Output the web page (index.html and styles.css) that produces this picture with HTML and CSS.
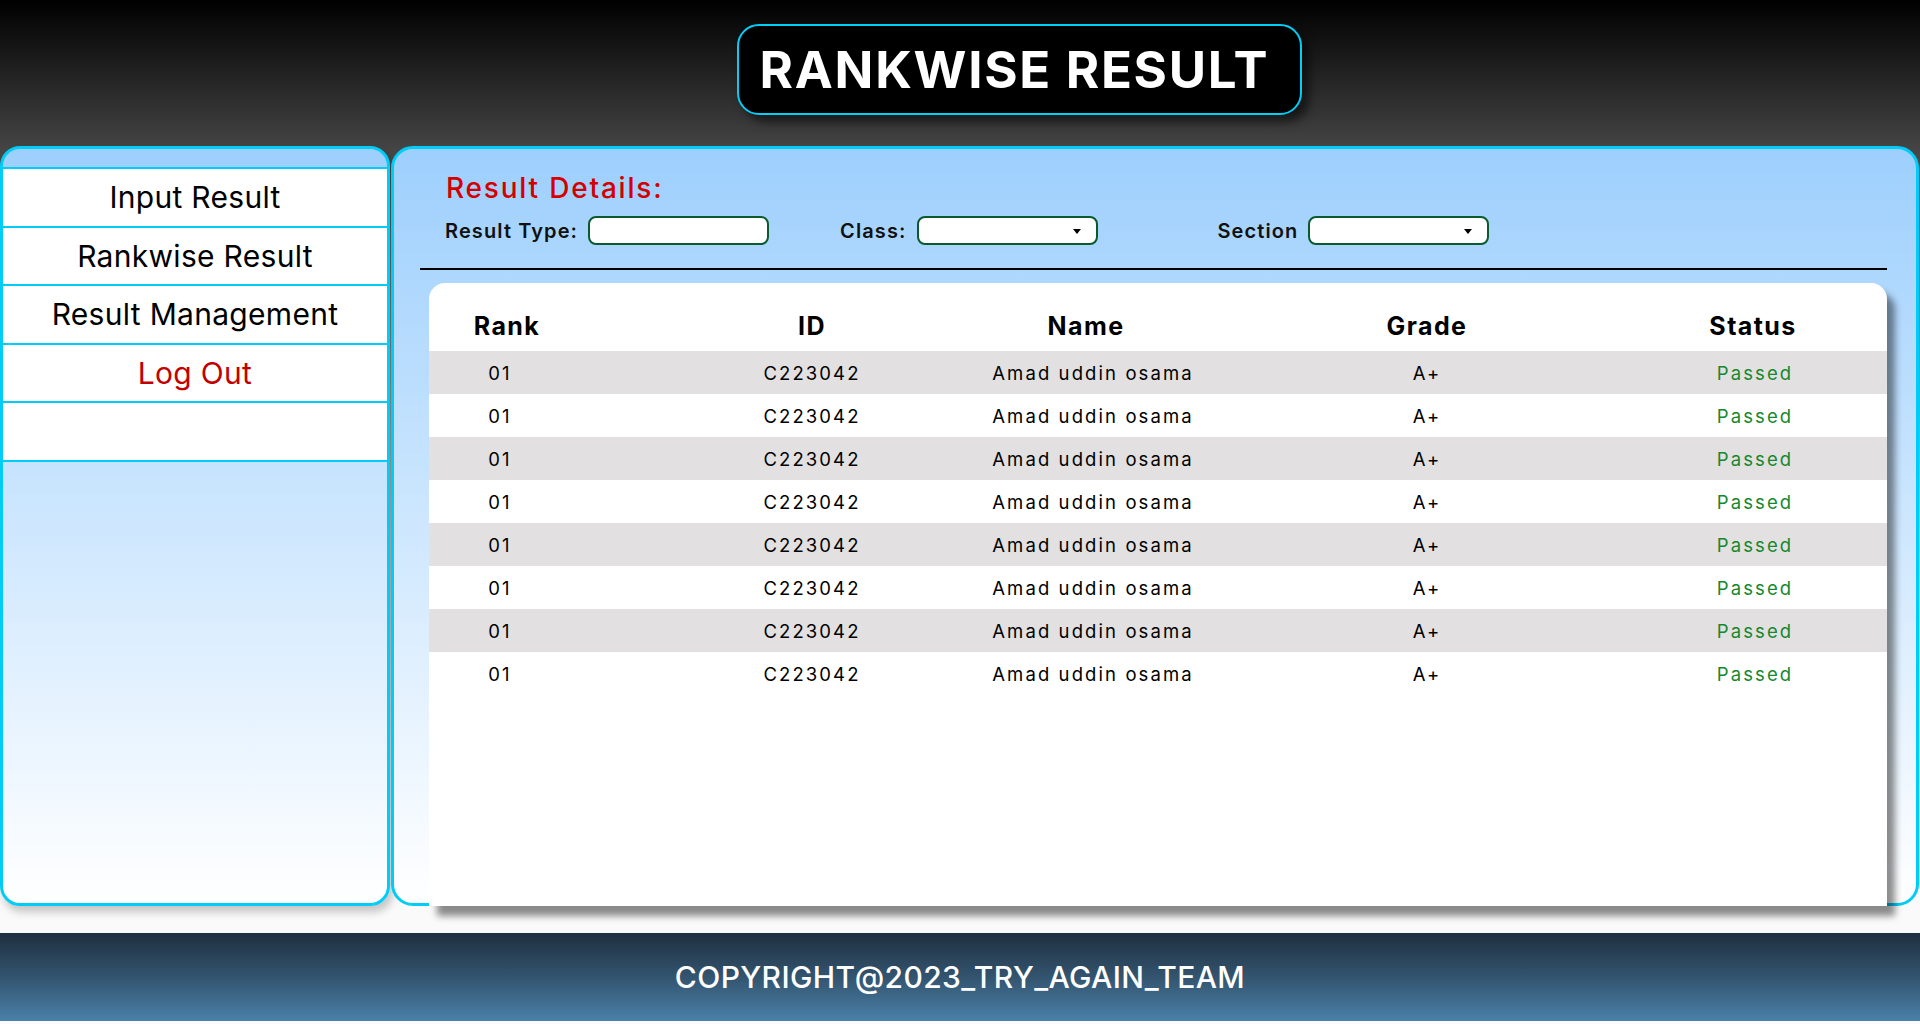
FILE: index.html
```html
<!DOCTYPE html>
<html lang="en">
<head>
<meta charset="utf-8">
<title>Rankwise Result</title>
<link rel="stylesheet" href="styles.css">
</head>
<body>
<header class="topbar">
  <h1 class="page-title">RANKWISE RESULT</h1>
</header>
<div class="layout">
  <aside class="sidebar">
    <nav class="menu">
      <a class="menu-item">Input Result</a>
      <a class="menu-item">Rankwise Result</a>
      <a class="menu-item">Result Management</a>
      <a class="menu-item logout">Log Out</a>
      <span class="menu-item empty"></span>
    </nav>
  </aside>
  <main class="panel">
    <h2 class="panel-title">Result Details:</h2>
    <div class="filters">
      <div class="field">
        <label class="field-label">Result Type:</label>
        <div class="box"></div>
      </div>
      <div class="field field-class">
        <label class="field-label">Class:</label>
        <div class="box select"><span class="caret"></span></div>
      </div>
      <div class="field field-section">
        <label class="field-label">Section</label>
        <div class="box select"><span class="caret"></span></div>
      </div>
    </div>
    <hr class="divider">
    <div class="table-card">
      <div class="trow thead">
        <div class="cell">Rank</div><div class="cell">ID</div><div class="cell">Name</div><div class="cell">Grade</div><div class="cell">Status</div>
      </div>
      <div class="trow shade"><div class="cell rank">01</div><div class="cell">C223042</div><div class="cell name">Amad uddin osama</div><div class="cell">A+</div><div class="cell pass">Passed</div></div>
      <div class="trow"><div class="cell rank">01</div><div class="cell">C223042</div><div class="cell name">Amad uddin osama</div><div class="cell">A+</div><div class="cell pass">Passed</div></div>
      <div class="trow shade"><div class="cell rank">01</div><div class="cell">C223042</div><div class="cell name">Amad uddin osama</div><div class="cell">A+</div><div class="cell pass">Passed</div></div>
      <div class="trow"><div class="cell rank">01</div><div class="cell">C223042</div><div class="cell name">Amad uddin osama</div><div class="cell">A+</div><div class="cell pass">Passed</div></div>
      <div class="trow shade"><div class="cell rank">01</div><div class="cell">C223042</div><div class="cell name">Amad uddin osama</div><div class="cell">A+</div><div class="cell pass">Passed</div></div>
      <div class="trow"><div class="cell rank">01</div><div class="cell">C223042</div><div class="cell name">Amad uddin osama</div><div class="cell">A+</div><div class="cell pass">Passed</div></div>
      <div class="trow shade"><div class="cell rank">01</div><div class="cell">C223042</div><div class="cell name">Amad uddin osama</div><div class="cell">A+</div><div class="cell pass">Passed</div></div>
      <div class="trow"><div class="cell rank">01</div><div class="cell">C223042</div><div class="cell name">Amad uddin osama</div><div class="cell">A+</div><div class="cell pass">Passed</div></div>
    </div>
  </main>
</div>
<div class="spacer"></div>
<footer class="footer">COPYRIGHT@2023_TRY_AGAIN_TEAM</footer>
</body>
</html>
```
FILE: styles.css
```css
* { box-sizing: border-box; }

html, body {
  margin: 0;
  height: 1024px;
  overflow: hidden;
}

body {
  font-family: Inter, "Noto Sans", "Liberation Sans", sans-serif;
  color: #000;
  background: linear-gradient(to bottom, #000 0px, #454545 150px, #b5b5b5 520px, #fafafa 900px, #fafafa 1024px);
}

/* ---------- header ---------- */
.topbar {
  height: 146px;
  display: flex;
  justify-content: center;
  align-items: flex-start;
  padding-top: 24px;
}

.page-title {
  margin: 0 0 0 119px;
  width: 565px;
  height: 91px;
  padding-right: 10px;
  background: #000;
  border: 2px solid #00cff8;
  border-radius: 22px;
  box-shadow: 7px 7px 10px rgba(0, 0, 0, 0.55);
  color: #fff;
  font-size: 51px;
  font-weight: 700;
  letter-spacing: 1.7px;
  line-height: 87px;
  text-align: center;
}

/* ---------- layout ---------- */
.layout {
  display: flex;
  gap: 1px;
  height: 760px;
}

.sidebar {
  width: 390px;
  flex: none;
  border: 3px solid #00cdf7;
  border-radius: 20px;
  padding-top: 18px;
  background: linear-gradient(to bottom, #9dcffd 0%, #fff 100%);
  box-shadow: 3px 6px 8px rgba(0, 0, 0, 0.22);
}

.menu {
  display: flex;
  flex-direction: column;
}

.menu-item {
  height: 58.5px;
  display: flex;
  align-items: center;
  justify-content: center;
  background: #fff;
  border-top: 2px solid #00cdf7;
  font-size: 30px;
  letter-spacing: 0.3px;
  color: #000;
  text-decoration: none;
}

.menu-item.logout { color: #c20000; }

.menu-item.empty { border-bottom: 2px solid #00cdf7; height: 60.5px; }

/* ---------- main panel ---------- */
.panel {
  width: 1528px;
  flex: none;
  display: flex;
  flex-direction: column;
  border: 3px solid #00cdf7;
  border-radius: 22px;
  padding-top: 22px;
  background: linear-gradient(to bottom, #9dcffd 0%, #fff 100%);
}

.panel-title {
  margin: 0 0 0 52px;
  font-size: 28px;
  line-height: 34px;
  font-weight: 500;
  letter-spacing: 1.8px;
  color: #d40000;
}

.filters {
  display: flex;
  align-items: center;
  margin: 11px 0 0 51px;
  height: 29px;
}

.field {
  display: flex;
  align-items: center;
  gap: 10px;
}

.field-class { margin-left: 71px; }
.field-section { margin-left: 120px; }

.field-label {
  font-size: 20px;
  font-weight: 600;
  letter-spacing: 1.1px;
  color: #111;
}

.box {
  width: 181px;
  height: 29px;
  background: #fff;
  border: 2px solid #0b5a2e;
  border-radius: 8px;
}

.select {
  display: flex;
  align-items: center;
  justify-content: flex-end;
  padding-right: 15px;
}

.caret {
  width: 0;
  height: 0;
  border-left: 4px solid transparent;
  border-right: 4px solid transparent;
  border-top: 5px solid #000;
  margin-top: 2px;
}

.divider {
  margin: 23px 29px 0 26px;
  border: 0;
  border-top: 2px solid #000;
  height: 0;
}

/* ---------- table ---------- */
.table-card {
  flex: 1;
  margin: 13px 29px -3px 35px;
  padding-top: 17px;
  background: #fff;
  border-radius: 16px 16px 0 0;
  box-shadow: 8px 10px 7px rgba(0, 0, 0, 0.45);
}

.trow {
  display: grid;
  grid-template-columns: 156px 454px 94px 588px 64px;
  height: 43px;
  align-items: center;
  font-size: 18.5px;
  letter-spacing: 2.1px;
}

.trow.thead {
  height: 51px;
  font-size: 25px;
  font-weight: 650;
  letter-spacing: 1.4px;
}

.trow.shade { background: #e2e0e1; }

.cell {
  display: flex;
  justify-content: center;
  white-space: nowrap;
}

.cell.rank { margin-left: -14px; }
.cell.name { margin-left: 14px; }
.cell.pass { color: #14882e; margin-left: 4px; }

/* ---------- footer ---------- */
.spacer {
  height: 27px;
}

.footer {
  height: 88px;
  display: flex;
  align-items: center;
  justify-content: center;
  background: linear-gradient(to bottom, #1f2f3f 0%, #33546f 50%, #4a80a9 100%);
  color: #fff;
  font-size: 30px;
  font-weight: 500;
  letter-spacing: 0.4px;
}
```
